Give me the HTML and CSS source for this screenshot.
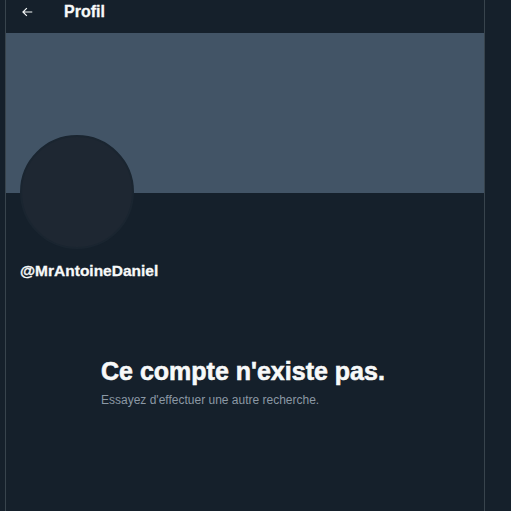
FILE: index.html
```html
<!DOCTYPE html>
<html lang="fr">
<head>
<meta charset="utf-8">
<title>Profil</title>
<link rel="stylesheet" href="styles.css">
</head>
<body>
<div class="page">
  <div class="gutter"></div>
  <main class="column">
    <header class="topbar">
      <svg class="back" viewBox="0 0 24 24" width="14" height="14" aria-hidden="true"><path d="M7.414 13l5.043 5.04-1.414 1.42L3.586 12l7.457-7.46 1.414 1.42L7.414 11H21v2H7.414z"/></svg>
      <h1 class="title">Profil</h1>
    </header>
    <div class="banner"></div>
    <section class="profile">
      <div class="avatar"></div>
      <div class="handle">@MrAntoineDaniel</div>
    </section>
    <section class="empty">
      <h2 class="empty-title">Ce compte n'existe pas.</h2>
      <p class="empty-text">Essayez d'effectuer une autre recherche.</p>
    </section>
  </main>
  <div class="side"></div>
</div>
</body>
</html>
```
FILE: styles.css
```css
html, body {
  margin: 0;
  padding: 0;
  background: #15202b;
  height: 100%;
  overflow: hidden;
}
body {
  font-family: "Liberation Sans", Arial, sans-serif;
  color: #f7f9f9;
}
.page {
  display: flex;
  height: 511px;
}
.gutter {
  width: 5px;
  flex: none;
}
.column {
  width: 478px;
  flex: none;
  border-left: 1px solid #38444d;
  border-right: 1px solid #38444d;
  display: flex;
  flex-direction: column;
}
.side {
  flex: 1;
}
.topbar {
  height: 33px;
  display: flex;
  align-items: center;
  padding-left: 14px;
  box-sizing: border-box;
}
.back {
  fill: #f7f9f9;
  flex: none;
  margin-top: -9px;
}
.title {
  margin: -9px 0 0 30px;
  font-size: 16px;
  font-weight: 700;
  line-height: 20px;
  -webkit-text-stroke: 0.3px #f7f9f9;
}
.banner {
  height: 160px;
  background: #425466;
}
.profile {
  padding: 0 0 0 14px;
}
.avatar {
  width: 110px;
  height: 110px;
  border-radius: 50%;
  background: #1e2732;
  border: 2px solid #1a2530;
  margin-top: -58px;
}
.handle {
  margin-top: 12px;
  font-size: 15.5px;
  font-weight: 700;
  line-height: 20px;
  -webkit-text-stroke: 0.3px #f7f9f9;
}
.empty {
  padding: 76px 0 0 95px;
}
.empty-title {
  margin: 0;
  font-size: 25px;
  font-weight: 700;
  line-height: 28px;
  -webkit-text-stroke: 0.6px #f7f9f9;
}
.empty-text {
  margin: 7px 0 0;
  font-size: 12px;
  line-height: 16px;
  color: #8b98a5;
}
```
